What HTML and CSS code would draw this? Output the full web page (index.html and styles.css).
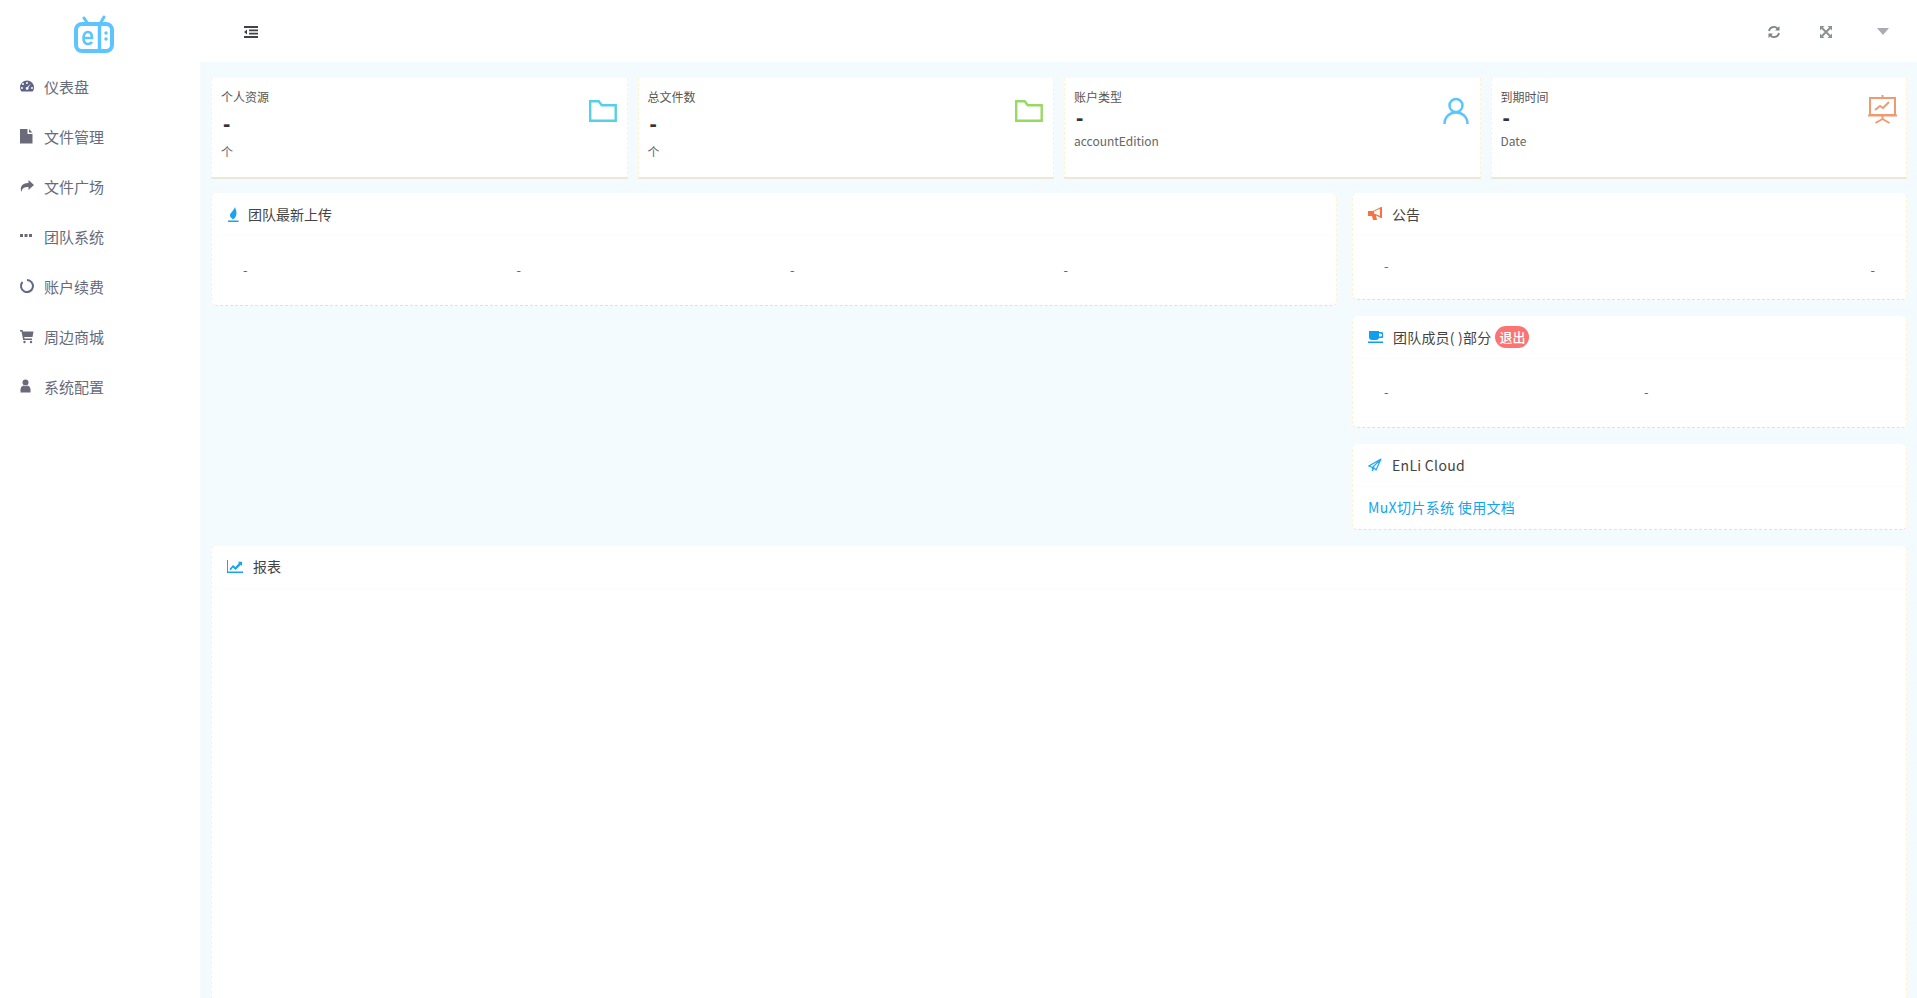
FILE: index.html
```html
<!DOCTYPE html>
<html lang="zh-CN">
<head>
<meta charset="utf-8">
<title>仪表盘</title>
<link rel="stylesheet" href="styles.css">
</head>
<body>
<div class="app">
  <aside class="sidebar">
    <div class="logo">
      <svg width="42" height="38" viewBox="0 0 42 38" fill="none">
        <path d="M15 9L11 3M27 9L31 2" stroke="#5cc4ff" stroke-width="3" stroke-linecap="round"/>
        <rect x="3" y="9" width="36" height="27" rx="6" stroke="#5cc4ff" stroke-width="4"/>
        <path d="M26.500 9V36" stroke="#5cc4ff" stroke-width="3.500"/>
        <circle cx="33" cy="18" r="1.700" fill="#5cc4ff"/><circle cx="33" cy="24" r="1.700" fill="#5cc4ff"/>
        <path d="M10.500 23h8.500c0-4-1.800-6-4.200-6s-4.300 2-4.300 6c0 4 2 6 4.300 6 2 0 3.300-.7 4.200-2" stroke="#5cc4ff" stroke-width="2.600"/>
      </svg>
    </div>
    <nav class="menu">
      <a class="menu-item"><svg class="menu-icon" viewBox="0 0 16 16"><path fill="#5d6486" fill-rule="evenodd" d="M8 2.500a7 7 0 0 1 7 7c0 1.600-.5 3-1.400 4H2.400A6.800 6.800 0 0 1 1 9.500a7 7 0 0 1 7-7zM4 5a1 1 0 1 0 0 2 1 1 0 0 0 0-2zm4-1a1 1 0 1 0 0 2 1 1 0 0 0 0-2zm4 1.500L8.300 9a1.400 1.400 0 1 0 1 .6zM3 9a1 1 0 1 0 0 2 1 1 0 0 0 0-2zm10 0a1 1 0 1 0 0 2 1 1 0 0 0 0-2z"/></svg><span>仪表盘</span></a>
      <a class="menu-item"><svg class="menu-icon" viewBox="0 0 16 16"><path fill="#6a6a7a" d="M1 1h7.500v5H13.500v9.500H1zM10 1l3.500 3.500H10z"/></svg><span>文件管理</span></a>
      <a class="menu-item"><svg class="menu-icon" viewBox="0 0 16 16"><path fill="#6a6a7a" d="M9.500 2L15 7l-5.500 5V9C5.500 9 3 10 2.500 14 1 10.500 1.500 5 9.500 5z"/></svg><span>文件广场</span></a>
      <a class="menu-item"><svg class="menu-icon" viewBox="0 0 16 16"><path fill="#6a6a7a" d="M1 6h3v3H1zM5.500 6h3v3h-3zM10 6h3v3h-3z"/></svg><span>团队系统</span></a>
      <a class="menu-item"><svg class="menu-icon" viewBox="0 0 16 16" fill="none"><path d="M8 2a6 6 0 1 1-4.500 2" stroke="#62688a" stroke-width="2"/></svg><span>账户续费</span></a>
      <a class="menu-item"><svg class="menu-icon" viewBox="0 0 16 16"><path fill="#6a6a7a" d="M1 2h2.500l.5 1.500h10.500L13.500 9H5.200l.3 1.500H13V12H4.200L2.500 3.500H1z"/><circle cx="5.500" cy="14" r="1.200" fill="#6a6a7a"/><circle cx="12" cy="14" r="1.200" fill="#6a6a7a"/></svg><span>周边商城</span></a>
      <a class="menu-item"><svg class="menu-icon" viewBox="0 0 16 16"><circle cx="6.500" cy="4.500" r="3" fill="#6a6a7a"/><path fill="#6a6a7a" d="M1.500 14.500V11a4 4 0 0 1 3-3.500 3.500 3.500 0 0 0 4 0 4 4 0 0 1 3 3.500v3.500z"/></svg><span>系统配置</span></a>
    </nav>
  </aside>
  <div class="main">
    <header class="topbar">
      <svg class="toggle" width="14" height="12" viewBox="0 0 14 12"><path fill="#3f4246" d="M0 0h14v2H0zM5 3.400h9v1.800H5zM5 6.800h9v1.800H5zM0 10h14v2H0zM3 3.500v5L0 6z"/></svg>
      <div class="top-tools">
        <svg width="14" height="14" viewBox="0 0 14 14" fill="none"><path d="M2 6a5 5 0 0 1 9-2M12 8a5 5 0 0 1-9 2" stroke="#7d8288" stroke-width="1.800"/><path fill="#7d8288" d="M12.500 1v4.500H8zM1.500 13V8.500H6z"/></svg>
        <svg width="14" height="14" viewBox="0 0 14 14"><path d="M3 3l8 8M11 3l-8 8" stroke="#8b9096" stroke-width="2"/><path fill="#8b9096" d="M1 1h4.500L1 5.500zM13 1v4.500L8.500 1zM1 13V8.500L5.500 13zM13 13H8.500L13 8.500z"/></svg>
        <span class="caret"></span>
      </div>
    </header>
    <main class="content">
      <section class="stats">
        <div class="stat">
          <div class="stat-text"><div class="stat-title">个人资源</div><div class="stat-value tall">-</div><div class="stat-sub">个</div></div>
          <svg class="stat-icon icon-folder" width="28" height="22" viewBox="0 0 28 22" fill="none"><path d="M1.200 1.200h8.500l3 4h14v15.600H1.200z" stroke="#55d0e8" stroke-width="2.400"/></svg>
        </div>
        <div class="stat">
          <div class="stat-text"><div class="stat-title">总文件数</div><div class="stat-value tall">-</div><div class="stat-sub">个</div></div>
          <svg class="stat-icon icon-folder" width="28" height="22" viewBox="0 0 28 22" fill="none"><path d="M1.200 1.200h8.500l3 4h14v15.600H1.200z" stroke="#97d965" stroke-width="2.400"/></svg>
        </div>
        <div class="stat">
          <div class="stat-text"><div class="stat-title">账户类型</div><div class="stat-value short">-</div><div class="stat-sub wide">accountEdition</div></div>
          <svg class="stat-icon icon-user" width="26" height="28" viewBox="0 0 26 28" fill="none"><circle cx="13" cy="8.500" r="6.500" stroke="#5cc4ff" stroke-width="2.500"/><path d="M1.500 27c0-7 5-11.500 11.500-11.500S24.500 20 24.500 27" stroke="#5cc4ff" stroke-width="2.500"/></svg>
        </div>
        <div class="stat">
          <div class="stat-text"><div class="stat-title">到期时间</div><div class="stat-value short">-</div><div class="stat-sub wide">Date</div></div>
          <svg class="stat-icon icon-board" width="29" height="29" viewBox="0 0 29 29" fill="none"><path d="M14.500 0v3M1 3h27M2 4v16h25V4M0 20.500h29M14.500 21v3M14.500 24l-7 4M14.500 24l7 4" stroke="#f19a6f" stroke-width="2"/><path d="M7 15l5-4 3 2 6-6" stroke="#f19a6f" stroke-width="2"/></svg>
        </div>
      </section>
      <section class="middle">
        <div class="panel panel-latest">
          <div class="panel-head"><svg class="panel-icon" width="12" height="15" viewBox="0 0 12 15"><path fill="#1aa3ee" d="M8 0c.5 2 1.500 3.500 1.500 6 0 3.500-2 6-4 6.500C5.500 11 3.500 11 3 9c-.5-3 3-4 5-9zM1 13.500h10.500V15H1z"/></svg><span class="panel-title">团队最新上传</span></div>
          <div class="latest-body"><span>-</span><span>-</span><span>-</span><span>-</span></div>
        </div>
        <div class="side">
          <div class="panel panel-notice">
            <div class="panel-head"><svg class="panel-icon notice-icon" width="15" height="14" viewBox="0 0 15 14"><path fill="#fb7043" d="M0 4h5l8-4h1v11h-1L8 8.500l1 4.500H5L4 9H0z"/><path fill="#fff" d="M6 4.500l6-2.700v6.900L6 6.500z"/></svg><span class="panel-title">公告</span></div>
            <div class="notice-body"><span class="notice-left">-</span><span class="notice-right">-</span></div>
          </div>
          <div class="panel panel-team">
            <div class="panel-head"><svg class="panel-icon team-icon" width="15" height="12" viewBox="0 0 15 12"><path fill="#0f9ff0" d="M1 0h10v1h2a2 2 0 0 1 0 6h-2a3 3 0 0 1-3 2H4a3 3 0 0 1-3-3zM11 2.500V5.500h1.500a1.500 1.500 0 0 0 0-3zM0 10.500h15V12H0z"/></svg><span class="panel-title team-title">团队成员( )部分</span><span class="badge">退出</span></div>
            <div class="team-body"><span>-</span><span>-</span></div>
          </div>
          <div class="panel panel-link">
            <div class="panel-head"><svg class="panel-icon" width="14" height="14" viewBox="0 0 14 14" fill="none"><path d="M13 1L1 8l3.500 1.500L13 1l-5 11-2.500-2.500L4.500 13V9.500" stroke="#2aa8f0" stroke-width="1.300"/></svg><span class="panel-title cloud-title">EnLi Cloud</span></div>
            <div class="link-body"><a class="doc-link">MuX切片系统 使用文档</a></div>
          </div>
        </div>
      </section>
      <section class="panel panel-report">
        <div class="panel-head report-head"><svg class="panel-icon report-icon" width="16" height="13" viewBox="0 0 16 13"><path fill="#1aa3ee" d="M0 0h1v11.500h15V13H0zM2.500 9l3.500-4 2.500 2L12 3 10.800 1.800H15v4.200l-1.200-1.200-5.200 5.200L6 7.500 3.500 10.500z"/></svg><span class="panel-title">报表</span></div>
      </section>
    </main>
  </div>
</div>
</body>
</html>
```
FILE: styles.css
```css
* { box-sizing: border-box; }
html, body { margin: 0; height: 100%; overflow: hidden; }
body {
  font-family: "Noto Sans CJK SC", "Open Sans", sans-serif;
  font-size: 14px;
  color: #444;
  background: #fff;
}
.app { display: flex; height: 998px; }
.sidebar { width: 200px; flex: none; background: #fff; }
.logo { height: 61px; display: flex; justify-content: center; align-items: flex-start; padding: 15px 13px 0 0; }
.menu { display: flex; flex-direction: column; }
.menu-item { height: 50px; display: flex; align-items: center; padding-left: 19px; color: #666b7c; font-size: 15px; }
.menu-icon { width: 16px; height: 16px; margin-right: 9px; flex: none; }
.main { flex: 1; min-width: 0; display: flex; flex-direction: column; }
.topbar { height: 62px; flex: none; display: flex; align-items: center; justify-content: space-between; padding: 1px 28px 0 44px; background: #fff; }
.top-tools { display: flex; align-items: center; gap: 38px; }
.caret { width: 0; height: 0; margin-left: 6px; border: 6px solid transparent; border-top: 7px solid #a9adb3; border-bottom: 0; }
.content { flex: 1; min-height: 0; background: #f3fbff; padding: 16px 10px 0 11px; display: flex; flex-direction: column; }
.stats { display: grid; grid-template-columns: repeat(4, 1fr); gap: 10px; height: 101px; flex: none; }
.stat {
  display: flex; justify-content: space-between; align-items: flex-start;
  background: #fff; padding: 9px 9px 0 9px;
  border-left: 1px dashed #fff2cf; border-right: 1px dashed #fff2cf;
  border-bottom: 2px solid #ece8d8;
}
.stat-title { font-size: 12px; line-height: 20px; color: #555; }
.stat-value { font-family: "Liberation Sans", sans-serif; font-size: 22px; font-weight: 700; line-height: 18px; color: #333; padding-left: 2px; }
.stat-value.short { margin-top: 2px; }
.stat-value.tall { margin-top: 8px; }
.stat-sub { font-size: 12px; line-height: 20px; color: #666; }
.stat-sub.wide { margin-top: 4px; }
.stat-value.tall + .stat-sub { margin-top: 9px; }
.stat-icon { margin-top: 13px; flex: none; }
.icon-folder { margin-right: 1px; }
.icon-user { margin-top: 10px; margin-right: 2px; }
.icon-board { margin-top: 8px; }
.middle { display: grid; grid-template-columns: 1126px 1fr; column-gap: 15px; margin-top: 14px; height: 337px; flex: none; align-items: start; }
.panel {
  background: #fff; border-radius: 5px;
  border-left: 1px dashed #fff2cf; border-right: 1px dashed #fff2cf;
  border-bottom: 1px dashed #ffd3c6;
}
.panel-head { height: 43px; display: flex; align-items: center; padding-left: 15px; border-bottom: 1px solid #fcfcfc; }
.report-head { padding-bottom: 2px; }
.panel-icon { flex: none; margin-right: 9px; }
.notice-icon, .team-icon { margin-right: 9px; }
.report-icon { margin-right: 10px; }
.panel-title { font-size: 14px; color: #444; }
.team-title { letter-spacing: .2px; margin-left: 1px; }
.cloud-title { letter-spacing: .3px; margin-left: 1px; }
.panel-latest { height: 113px; }
.latest-body { display: grid; grid-template-columns: repeat(4, 273.500px); padding: 20px 0 0 31px; line-height: 28px; font-size: 13px; color: #666; }
.side { display: flex; flex-direction: column; gap: 16px; }
.panel-notice { height: 107px; }
.notice-body { display: flex; justify-content: space-between; padding: 20px 31px 0 31px; font-size: 13px; color: #666; line-height: 20px; }
.notice-right { margin-top: 4px; }
.panel-team { height: 112px; }
.team-body { display: grid; grid-template-columns: 260px 1fr; padding: 23px 0 0 31px; font-size: 13px; color: #666; line-height: 20px; }
.badge { margin-left: 4px; height: 22px; width: 34px; border-radius: 11px; background: #fb7474; color: #fff; font-size: 13px; line-height: 22px; text-align: center; font-weight: 500; }
.panel-link { height: 86px; }
.link-body { padding: 8px 0 0 15px; line-height: 24px; }
.doc-link { color: #12a5ee; font-size: 14px; letter-spacing: .35px; }
.panel-report { flex: 1; margin-top: 16px; border-bottom: 0; border-radius: 5px 5px 0 0; }
```
